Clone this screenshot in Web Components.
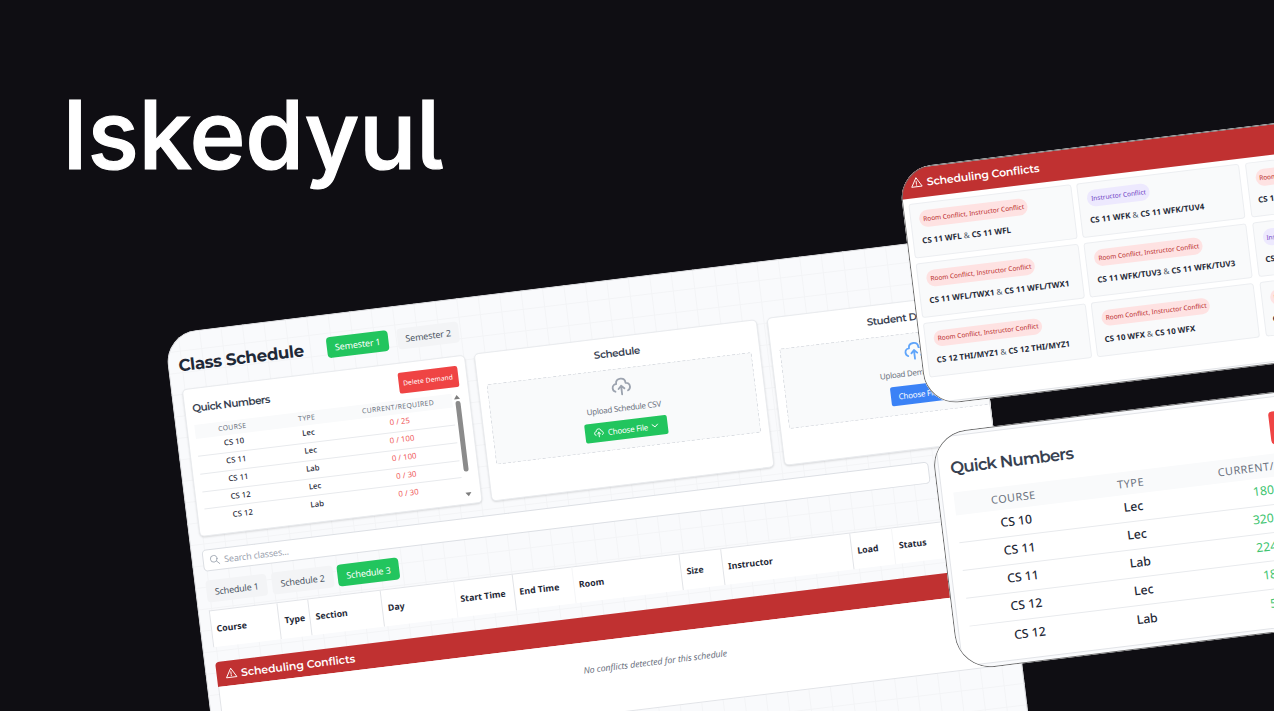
<!DOCTYPE html>
<html lang="en">
<head>
<meta charset="utf-8">
<title>Iskedyul</title>
<style>
html,body{margin:0;height:100%;overflow:hidden;background:#0f0e13}
</style>
</head>
<body>
<iskedyul-hero></iskedyul-hero>
<script>
const define = (name, render, ready) => customElements.define(name, class extends HTMLElement {
  connectedCallback() {
    if (this.shadowRoot) return;
    this.attachShadow({ mode: 'open' }).innerHTML = render(this);
    if (ready) ready(this);
  }
});
const ctx = document.createElement('canvas').getContext('2d');

/* A label that spreads its letters evenly over a given width. */
define('fit-label', el => `<style>
  :host{display:inline-block;white-space:pre;width:${el.getAttribute('w')}px}
</style><slot></slot>`, el => {
  const cs = getComputedStyle(el), t = el.textContent;
  ctx.font = `${cs.fontStyle} ${cs.fontWeight} ${100}px ${cs.fontFamily}`;
  const natural = ctx.measureText(t).width * parseFloat(cs.fontSize) / 100;
  el.style.letterSpacing = ((+el.getAttribute('w') - natural) / (t.length - 1)).toFixed(3) + 'px';
});

const icons = {
  upload: '<path d="M12 22V11M12 11l3.7 3.7M12 11l-3.7 3.7M20 17.6c1.5-.6 3-1.9 3-4.6 0-4-3.3-5-5-5 0-2 0-6-6-6S6 6 6 8c-1.700 0-5 1-5 5 0 2.700 1.500 4 3 4.600"/>',
  chevron: '<path d="M2 8l10 9 10-9"/>',
  search: '<circle cx="10" cy="10" r="8"/><path d="M16 16l7 7"/>',
  warning: '<path d="M12 2.500 1 21.500h22zM12 9.500v5.500M12 17.300v1"/>'
};
define('line-icon', el => `<style>
  :host{display:inline-block;flex:none;width:${el.getAttribute('size')}px;height:${el.getAttribute('size')}px}
  svg{display:block;width:100%;height:100%;overflow:visible;fill:none;stroke:currentColor;stroke-linecap:round;stroke-linejoin:round;stroke-width:${el.getAttribute('stroke') || 2}}
</style><svg viewBox="0 0 24 24">${icons[el.getAttribute('name')]}</svg>`);

/* Rounded sheet lying tilted on the dark canvas. */
define('tilted-sheet', () => `<style>
  :host{position:absolute;display:block;box-sizing:border-box;overflow:hidden;transform-origin:0 0;transform:rotate(-6.95deg);
    box-shadow:none;background:#f9fafc}
  :host::after{content:"";position:absolute;inset:0;border:1px solid var(--edge,#6b6b6b);border-radius:inherit;pointer-events:none}
</style><slot></slot>`);

define('tab-button', el => `<style>
  :host{display:flex;align-items:center;justify-content:center;box-sizing:border-box;height:21.5px;border-radius:4px;
    background:#f3f4f6;color:#4b5563;font-size:9px}
  :host([active]){background:#22c55e;color:#fff}
</style><slot></slot>`);

define('surface-card', () => `<style>
  :host{display:block;box-sizing:border-box;flex:none;width:285px;height:148.400px;background:#fff;border-radius:5px;
    border:.7px solid #e9ebee;box-shadow:0 1px 2px rgba(0,0,0,.13)}
</style><slot></slot>`);

/* Table of demand per course; every length is in em, so font-size scales it. */
define('quick-numbers', el => {
  const rows = el.getAttribute('rows').split(',').map(r => r.split(':'));
  return `<style>
  :host{display:block;padding:.85em 0 0 .75em;position:relative}
  header{display:flex;justify-content:space-between;height:2.7em}
  h2{margin:.3em 0 0;font:600 1.05em/1.600 Montserrat,Inter,sans-serif;color:#374151;white-space:nowrap}
  button{all:unset;box-sizing:border-box;width:6em;height:2.15em;border-radius:.25em;background:#ef4444;color:#fff;
    margin-right:.8em;display:flex;align-items:center;justify-content:center}
  button span{font:.66em "Noto Sans",sans-serif;letter-spacing:.02em;white-space:nowrap}
  .table{width:25.9em}
  .row{display:grid;grid-template-columns:7.5em 7.5em 1fr;text-align:center;height:1.785em;line-height:1.785em;align-items:center;
    box-sizing:border-box;border-bottom:.7px solid #e8eaed;color:#1f2937}
  .row:last-child{border:0}
  .row span{font-size:.78em;line-height:1.785em;font-weight:500}
  .row span:last-child{color:var(--value);font-weight:400;padding-right:var(--nudge,0)}
  .row.head{height:1.43em;background:#f9fafb;border:0}
  .row.head span{font-size:.69em;color:#6b7280;letter-spacing:.045em;font-weight:400;padding:0}
  .row.head span:last-child{color:#6b7280}
  .bar{position:absolute;left:26.850em;top:3.75em;width:.6em;height:10.200em;display:flex;flex-direction:column;align-items:center}
  .bar i{flex:none;width:.5em;height:7.150em;margin:.2em 0 auto;border-radius:.3em;background:#8b8b8b}
  .bar b{width:0;height:0;border:.3em solid transparent;border-top:0;border-bottom:.45em solid #7d7d7d}
  .bar b:last-child{transform:scaleY(-1)}
  </style>
  <header><h2><fit-label w="${el.getAttribute('title-width')}">Quick Numbers</fit-label></h2><button><span>Delete Demand</span></button></header>
  <div class="table"><div class="row head"><span>COURSE</span><span>TYPE</span><span>CURRENT/REQUIRED</span></div>
  ${rows.map(r => `<div class="row"><span>${r[0]}</span><span>${r[1]}</span><span>${r[2]}</span></div>`).join('')}</div>
  ${el.hasAttribute('scroll') ? '<div class="bar"><b></b><i></i><b></b></div>' : ''}`;
});

define('upload-zone', el => `<style>
  :host{display:flex;flex-direction:column;align-items:center;font-size:8px;color:#6b7280}
  h3{margin:7.400px 0 0;font:600 10.200px/16px Montserrat,Inter,sans-serif;color:#374151}
  .zone{box-sizing:border-box;width:267px;height:81px;margin-top:7.300px;border:.8px dashed #d9dce1;background:#f9fafb;border-radius:2px;
    display:flex;flex-direction:column;align-items:center}
  .cloud{color:var(--icon,#9ca3af);margin:8.500px 0 0;height:19px}
  p{margin:5.300px 0 6.600px;line-height:12px}
  button{all:unset;box-sizing:border-box;height:18.500px;width:var(--button-width,83.500px);background:var(--button,#22c55e);border-radius:2px;
    color:#fff;display:flex;align-items:center;justify-content:center;gap:4px}
</style><h3><fit-label w="${el.getAttribute('tw')}">${el.getAttribute('heading')}</fit-label></h3>
<div class="zone"><line-icon class="cloud" name="upload" size="19" stroke="2.300"></line-icon>
<p><fit-label w="${el.getAttribute('pw')}">${el.getAttribute('prompt')}</fit-label></p>
<button>${el.hasAttribute('plain') ? '' : '<line-icon name="upload" size="9.500" stroke="2.300"></line-icon>'}<fit-label w="40.500">Choose File</fit-label>${el.hasAttribute('plain') ? '' : '<line-icon name="chevron" size="6.500" stroke="3.500"></line-icon>'}</button></div>`);

define('conflict-banner', () => `<style>
  :host{display:flex;align-items:center;box-sizing:border-box;background:#c03131;color:#fff;
    font:600 10.900px/16px Montserrat,Inter,sans-serif}
  line-icon{margin-right:5px}
</style><line-icon name="warning" size="11"></line-icon><slot></slot>`);

define('conflict-card', el => {
  const room = el.getAttribute('kind') === 'room';
  return `<style>
  :host{display:block;box-sizing:border-box;height:55px;padding:7.600px 0 0 8px;background:#f9fafb;border:.8px solid #eceef1;border-radius:3px;white-space:nowrap}
  .badge{display:flex;width:fit-content;align-items:center;height:16.500px;box-sizing:border-box;padding:0 3.700px;border-radius:9px;
    font:6.500px "Noto Sans",sans-serif;background:${room ? '#fee2e2' : '#ede9fe'};color:${room ? '#b92b2b' : '#6d3fc4'}}
  p{margin:6px 0 0;font-size:8.050px;line-height:13px;color:#4b5563}
  b{color:#1f2937}
  </style><span class="badge"><fit-label w="${room ? 101.5 : 55}">${room ? 'Room Conflict, Instructor Conflict' : 'Instructor Conflict'}</fit-label></span>
  <p><b>${el.getAttribute('a')}</b> &amp; <b>${el.getAttribute('b')}</b></p>`;
});

define('schedule-app', () => {
  const cols = [['Course',68.5],['Type',31.3],['Section',72.9],['Day',74],['Start Time',58.5],['End Time',59.9],['Room',108.4],['Size',42],['Instructor',130],['Load',41.9],['Status',187.8]];
  return `<style>
  :host{display:block;box-sizing:border-box;width:900px;height:540px;padding:22.500px 0 0 10.500px;
    background:linear-gradient(90deg,#f3f4f6 1px,transparent 1px) 13.600px 0/21.600px 21.600px,linear-gradient(#f3f4f6 1px,transparent 1px) 0 18.500px/21.600px 21.600px,#f9fafc}
  .top{display:flex;height:21.500px;align-items:center}
  .top tab-button{width:62.500px;margin-right:8.500px}
  h1{margin:-1px 0 0;width:149.300px;font:700 16.700px/22px Montserrat,Inter,sans-serif;color:#1f2937;white-space:nowrap}
  .cards{display:flex;gap:9.500px;margin-top:13.200px}
  .search{box-sizing:border-box;width:732.500px;height:21.300px;margin-top:13.900px;border:.8px solid #dcdfe4;border-radius:4.500px;background:#fff;
    display:flex;align-items:center;padding-left:6px;gap:5px;font-size:9px;color:#9ca3af}
  .tabs{display:flex;gap:4.600px;margin-top:9.500px}
  .tabs tab-button{width:61.800px}
  .columns{display:flex;width:875px;height:37px;margin-top:8.600px;background:#fff;border-top:.8px solid #e2e4e8;border-left:.8px solid #e2e4e8;box-sizing:border-box}
  .columns div{box-sizing:border-box;flex:none;border-right:.8px solid #e2e4e8;padding-left:5px;font-size:8.800px;font-weight:700;line-height:36px;color:#1f2937;white-space:nowrap}
  .columns .soft{border-color:#f5f6f8}
  .columns .tight{padding-left:4px}
  conflict-banner{width:875px;height:25.200px;margin-top:14.600px;padding-left:9px;border-radius:4px 4px 0 0}
  .none{box-sizing:border-box;width:875px;height:74px;background:#fff;border:.8px solid #e2e4e8;border-top:0;text-align:center;
    font-style:italic;font-size:8.800px;line-height:57px;color:#6b7280}
  </style>
  <div class="top"><h1><fit-label w="126.500">Class Schedule</fit-label></h1><tab-button active><fit-label w="46">Semester 1</fit-label></tab-button><tab-button><fit-label w="46">Semester 2</fit-label></tab-button></div>
  <div class="cards">
    <surface-card><quick-numbers scroll style="font-size:10px;--value:#ef5b5b" title-width="78.500" rows="CS 10:Lec:0 / 25,CS 11:Lec:0 / 100,CS 11:Lab:0 / 100,CS 12:Lec:0 / 30,CS 12:Lab:0 / 30"></quick-numbers></surface-card>
    <surface-card><upload-zone heading="Schedule" tw="46.700" prompt="Upload Schedule CSV" pw="75"></upload-zone></surface-card>
    <surface-card><upload-zone plain heading="Student Demand" tw="86" prompt="Upload Demand CSV" pw="73" style="--icon:#60a5fa;--button:#3b82f6;--button-width:57px"></upload-zone></surface-card>
  </div>
  <div class="search"><line-icon name="search" size="10"></line-icon><fit-label w="65">Search classes...</fit-label></div>
  <div class="tabs"><tab-button><fit-label w="44">Schedule 1</fit-label></tab-button><tab-button><fit-label w="44.500">Schedule 2</fit-label></tab-button><tab-button active><fit-label w="44.500">Schedule 3</fit-label></tab-button></div>
  <div class="columns">${cols.map((c, i) => `<div class="${[3,5,9].includes(i) ? 'soft' : i === 4 ? 'tight' : ''}" style="width:${c[1]}px">${c[0]}</div>`).join('')}</div>
  <conflict-banner><fit-label w="115">Scheduling Conflicts</fit-label></conflict-banner>
  <div class="none"><fit-label w="144.500">No conflicts detected for this schedule</fit-label></div>`;
});

define('conflict-list', () => {
  const items = [
    ['room','CS 11 WFL','CS 11 WFL'],['inst','CS 11 WFK','CS 11 WFK/TUV4'],['room','CS 11 WFL','CS 11 WFX'],
    ['room','CS 11 WFL/TWX1','CS 11 WFL/TWX1'],['room','CS 11 WFK/TUV3','CS 11 WFK/TUV3'],['inst','CS 12 WFL','CS 12 WFL'],
    ['room','CS 12 THI/MYZ1','CS 12 THI/MYZ1'],['room','CS 10 WFX','CS 10 WFX'],['room','CS 12 WFX','CS 12 WFX']];
  return `<style>
  :host{display:block;width:520px;height:235px;background:#fff;padding-top:1px;border-bottom:.8px solid #e2e4e8}
  conflict-banner{height:29.500px;padding-left:11px}
  .grid{display:grid;grid-template-columns:repeat(3,164px);gap:5.200px;padding:5.200px 6.300px}
  </style><conflict-banner><fit-label w="113.500">Scheduling Conflicts</fit-label></conflict-banner>
  <div class="grid">${items.map(i => `<conflict-card kind="${i[0]}" a="${i[1]}" b="${i[2]}"></conflict-card>`).join('')}</div>`;
});

define('iskedyul-hero', () => `<style>
  :host{display:block;position:relative;width:1274px;height:711px;overflow:hidden;background:#0f0e13;font-family:"Noto Sans",sans-serif}
  .title{margin:0;padding:75.500px 0 0 62px;font:500 95.500px/116px Inter,sans-serif;color:#fff;font-feature-settings:"cv05";-webkit-text-stroke:1.200px #fff}
  .app{left:164px;top:334.200px;width:811.500px;height:520px;border-radius:32px;--edge:#d4d5d8}
  .conflicts{left:897.800px;top:169.300px;width:480px;height:239px;border-radius:33px}
  .numbers{left:930.400px;top:433.800px;width:460px;height:239px;border-radius:36px}
  .inner{box-sizing:border-box;margin:4.300px 0 0 4.300px;height:231px;background:#fff;border:.8px solid #e2e4e8;border-radius:8px}
  </style>
  <h1 class="title"><fit-label w="378">Iskedyul</fit-label></h1>
  <tilted-sheet class="app"><schedule-app></schedule-app></tilted-sheet>
  <tilted-sheet class="conflicts"><conflict-list></conflict-list></tilted-sheet>
  <tilted-sheet class="numbers"><div class="inner"><quick-numbers style="font-size:15.750px;width:440px;box-sizing:border-box;padding:.84em 0 0 .68em;--value:#3dc46f;--nudge:3px" title-width="124.500" rows="CS 10:Lec:180 / 25,CS 11:Lec:320 / 100,CS 11:Lab:224 / 100,CS 12:Lec:180 / 30,CS 12:Lab:54 / 30"></quick-numbers></div></tilted-sheet>`);
</script>
</body>
</html>
